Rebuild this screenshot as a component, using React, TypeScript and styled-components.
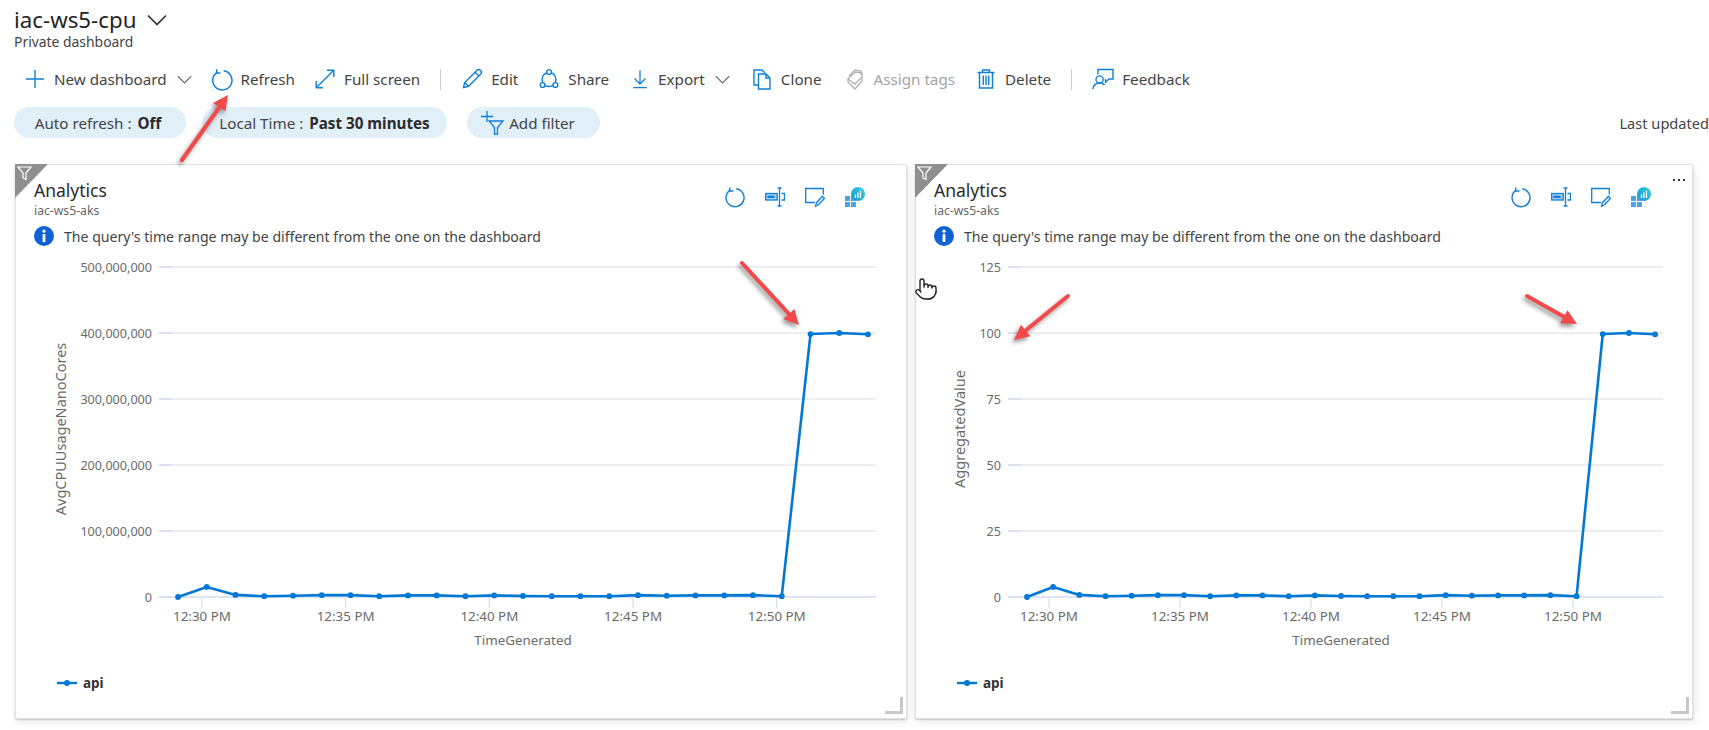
import React from "react";
import styled, { createGlobalStyle } from "styled-components";
import { Pointer } from "lucide-react";

const GlobalStyle = createGlobalStyle`
  html, body {
    margin: 0;
    padding: 0;
    background: #fff;
  }
  body {
    font-family: "Noto Sans", "Open Sans", sans-serif;
    color: #333;
  }
`;

const BLUE = "#0f7fd9";
const FONT = `"Noto Sans", "Open Sans", sans-serif`;

const Page = styled.div`
  position: relative;
  width: 1709px;
  height: 730px;
  overflow: hidden;
  background: #fff;
`;

const Header = styled.header`
  padding: 5px 0 0 14px;
`;

const TitleRow = styled.div`
  display: flex;
  align-items: center;
  gap: 11px;
  height: 30px;
`;

const Title = styled.h1`
  margin: 0;
  font-size: 22.3px;
  font-weight: 400;
  line-height: 30px;
  color: #252525;
`;

const Subtitle = styled.div`
  font-size: 13.9px;
  line-height: 16px;
  margin-top: -1px;
  color: #444;
`;

const Toolbar = styled.nav`
  display: flex;
  align-items: center;
  height: 32px;
  margin-top: 13px;
  padding-left: 10px;
`;

const ToolItem = styled.div<{ $gap: number; $disabled?: boolean }>`
  display: flex;
  align-items: center;
  gap: 8px;
  margin-right: ${(p) => p.$gap}px;
  font-size: 15.2px;
  white-space: nowrap;
  color: ${(p) => (p.$disabled ? "#a3a3a3" : "#444")};
`;

const ToolDivider = styled.span<{ $gap: number }>`
  width: 1px;
  height: 21px;
  background: #cfcfcf;
  margin-right: ${(p) => p.$gap}px;
`;

const FilterRow = styled.div`
  display: flex;
  align-items: center;
  height: 31px;
  margin-top: 12px;
`;

const Pill = styled.div<{ $width: number; $gap: number; $shift?: number }>`
  box-sizing: border-box;
  display: flex;
  align-items: center;
  justify-content: center;
  gap: 2px;
  width: ${(p) => p.$width}px;
  height: 31px;
  margin-right: ${(p) => p.$gap}px;
  padding-right: ${(p) => p.$shift ?? 0}px;
  border-radius: 16px;
  background: #e1eff9;
  font-size: 15.2px;
  white-space: nowrap;
  color: #444;

  b {
    font-weight: 700;
    color: #2b2b2b;
    margin-left: 4px;
  }
`;

const LastUpdated = styled.div`
  margin-left: auto;
  flex: none;
  font-size: 14.6px;
  white-space: nowrap;
  color: #444;
`;

const Board = styled.main`
  display: flex;
  gap: 8px;
  margin-top: 26px;
  padding-left: 15px;
`;

const Card = styled.section<{ $width: number }>`
  position: relative;
  box-sizing: border-box;
  width: ${(p) => p.$width}px;
  height: 555px;
  background: #fff;
  border: 1px solid #e2e2e2;
  border-radius: 2px;
  box-shadow: 0 1px 2px rgba(0, 0, 0, 0.2), 2px 3px 8px rgba(0, 0, 0, 0.08);
`;

const CornerFlag = styled.svg`
  position: absolute;
  left: -1px;
  top: -1px;
`;

const CardTop = styled.div`
  display: flex;
  justify-content: space-between;
  height: 81px;
  padding-left: 18px;
`;

const CardHeading = styled.div`
  padding-top: 14px;
`;

const CardTitle = styled.h2`
  margin: 0;
  font-size: 17.5px;
  font-weight: 400;
  line-height: 22px;
  color: #2b2b2b;
`;

const CardSub = styled.div`
  margin-top: 2px;
  font-size: 12.2px;
  line-height: 16px;
  color: #666;
`;

const Notice = styled.div`
  display: flex;
  align-items: center;
  gap: 10px;
  height: 20px;
  margin-top: 7px;
  font-size: 14.1px;
  white-space: nowrap;
  color: #444;
`;

const CardActions = styled.div`
  display: flex;
  align-items: center;
  gap: 20px;
  height: 22px;
  margin-top: 21px;
  padding-right: 41px;
`;

const MoreDots = styled.div`
  position: absolute;
  top: 14px;
  right: 7px;
  display: flex;
  gap: 3px;

  span {
    width: 2px;
    height: 2px;
    background: #333;
  }
`;

const ChartSvg = styled.svg`
  display: block;
  font-family: ${FONT};
`;

const Legend = styled.div`
  display: flex;
  align-items: center;
  gap: 6px;
  height: 20px;
  margin-top: 23px;
  padding-left: 41px;
  font-size: 13.5px;
  font-weight: 700;
  color: #333;
`;

const ResizeGrip = styled.span`
  position: absolute;
  right: 3px;
  bottom: 4px;
  width: 15px;
  height: 14px;
  border-right: 3px solid #c8c8c8;
  border-bottom: 3px solid #c8c8c8;
`;

const Overlay = styled.svg`
  position: absolute;
  left: 0;
  top: 0;
  pointer-events: none;
  filter: drop-shadow(-2px 3px 2px rgba(0, 0, 0, 0.4));
`;

const HandCursor = styled.div`
  position: absolute;
  left: 914px;
  top: 277px;
  line-height: 0;
`;

// --- toolbar icons, drawn to match the portal's line set ---

const Icon: React.FC<{ size?: number; color?: string; children: React.ReactNode }> = ({
  size = 22,
  color = BLUE,
  children,
}) => (
  <svg
    width={size}
    height={size}
    viewBox="0 0 22 22"
    fill="none"
    stroke={color}
    strokeWidth={1.4}
    style={{ flex: "none", display: "block" }}
  >
    {children}
  </svg>
);

const PlusIcon = () => (
  <Icon>
    <path d="M11 2v18M2 11h18" />
  </Icon>
);
const Chevron: React.FC<{ color?: string; width?: number }> = ({ color = "#666", width = 15 }) => (
  <svg width={width} height={width * 0.6} viewBox="0 0 20 12" fill="none" stroke={color} strokeWidth={1.7} style={{ flex: "none" }}>
    <path d="M1 1.5l9 9 9-9" />
  </svg>
);
const RefreshIcon = () => (
  <Icon size={23}>
    <path d="M13 2.700a9.200 9.200 0 1 1-6.900 1.900" />
    <path d="M6.400 1.200v3.600H10" />
  </Icon>
);
const FullScreenIcon = () => (
  <Icon>
    <path d="M2.500 19.500l17-17M13 2.200h6.800V9M2.200 13v6.800H9" />
  </Icon>
);
const EditIcon = () => (
  <Icon>
    <path d="M2.500 19.500l1.200-5L15.800 2.400a2 2 0 0 1 3.800 3.800L7.500 18.300z" />
    <path d="M3.700 14.500l3.800 3.800M14 4.200l3.800 3.800" />
  </Icon>
);
const ShareIcon = () => (
  <Icon>
    <circle cx="11" cy="11.500" r="7" />
    <circle cx="11" cy="4" r="2.400" fill="#fff" />
    <circle cx="4.600" cy="17" r="2.400" fill="#fff" />
    <circle cx="17.400" cy="17" r="2.400" fill="#fff" />
  </Icon>
);
const ExportIcon = () => (
  <Icon size={20}>
    <path d="M11 1.500v15M5 10.500l6 6 6-6M3.500 20.500h15" />
  </Icon>
);
const CloneIcon = () => (
  <Icon>
    <path d="M7 17H3V2h8l3 3" />
    <path d="M7.500 6h7.500l4 4v11H7.500z" />
    <path d="M15 6v4h4" />
  </Icon>
);
const TagsIcon = () => (
  <Icon color="#b4b4b4">
    <path d="M5 8l6-6 6 1v4" />
    <path d="M4 11l7-7 7 1v4l-7 7z" />
    <path d="M4 11v3l7 7 7-8v-4" />
  </Icon>
);
const DeleteIcon = () => (
  <Icon>
    <path d="M2.500 4.500h17M7.500 4.500V2h7v2.500M4.500 4.500V20h13V4.500" strokeWidth={1.5} />
    <path d="M8.300 7.500v9.500M11 7.500v9.500M13.700 7.500v9.500" />
  </Icon>
);
const FeedbackIcon = () => (
  <Icon>
    <circle cx="7.600" cy="11.500" r="3.600" />
    <path d="M1 21c0-3.600 3-6 6.600-6 2 0 3.700.8 5 2" />
    <path d="M6 6V1.500h15V11h-4l-3.500 3.200V11" />
  </Icon>
);
const AddFilterIcon = () => (
  <svg width="27" height="26" viewBox="0 0 27 26" fill="none" stroke={BLUE} strokeWidth={1.3} style={{ flex: "none" }}>
    <path d="M7 1v11M1 6.500h12" />
    <path d="M9 11h14l-5.500 6.500V24h-3v-6.500z" />
  </svg>
);

// --- tile icons ---

const TileRefresh = () => (
  <Icon size={21}>
    <path d="M12.800 1.900a9.400 9.400 0 1 1-7 1.900" strokeWidth={1.5} />
    <path d="M6 .6v3.600h4" strokeWidth={1.5} />
  </Icon>
);
const RenameIcon = () => (
  <svg width="20" height="20" viewBox="0 0 20 20" fill="none" stroke={BLUE} strokeWidth={1.3} style={{ flex: "none" }}>
    <rect x="0.700" y="6.500" width="11.500" height="6.500" fill="#a8d2f2" />
    <rect x="2.500" y="8.600" width="7" height="2.400" fill={BLUE} stroke="none" />
    <path d="M12.500 1h4M12.500 19h4M14.500 1v18M16.500 6.500h3v6.500h-3" />
  </svg>
);
const NoteIcon = () => (
  <svg width="20" height="20" viewBox="0 0 20 20" fill="none" stroke={BLUE} strokeWidth={1.3} style={{ flex: "none" }}>
    <path d="M10 15.500H.7V1.500h17.600v6" />
    <path d="M10.500 19.300l1-3.600 6-6.400 2 2-6 6.400z" />
  </svg>
);
const WorkbookIcon: React.FC<{ id: string }> = ({ id }) => (
  <svg width="20" height="20" viewBox="0 0 20 20" style={{ flex: "none" }}>
    <defs>
      <linearGradient id={id} x1="0" y1="1" x2="1" y2="0">
        <stop offset="0" stopColor="#1b93d1" />
        <stop offset="1" stopColor="#36d0e4" />
      </linearGradient>
    </defs>
    <path d="M0 9h5v5H0zM6 9h5v5H6zM0 15h5v5H0zM6 15h5v5H6z" fill="#4aa3e4" />
    <circle cx="13" cy="7" r="7" fill={`url(#${id})`} />
    <path d="M9.800 7.500h1.300V11H9.800zM12.300 5.500h1.300V11h-1.300zM14.800 3.800h1.300V11h-1.300z" fill="#fff" />
  </svg>
);
const InfoIcon = () => (
  <svg width="20" height="20" viewBox="0 0 20 20" style={{ flex: "none" }}>
    <circle cx="10" cy="10" r="10" fill="#0f62d6" />
    <circle cx="10" cy="5.200" r="1.600" fill="#fff" />
    <rect x="8.600" y="8" width="2.800" height="8" fill="#fff" />
  </svg>
);

// --- chart ---

const SAMPLES = [
  0, 3.8, 0.8, 0.3, 0.5, 0.7, 0.7, 0.3, 0.6, 0.6, 0.3, 0.6, 0.4, 0.3, 0.3, 0.3, 0.7, 0.5, 0.6, 0.6, 0.7, 0.3, 99.6,
  100, 99.5,
];
const TICKS = ["12:30 PM", "12:35 PM", "12:40 PM", "12:45 PM", "12:50 PM"];
const ZERO_Y = 351;
const ROW = 66;

interface IChartProps {
  width: number;
  plotLeft: number;
  plotRight: number;
  firstX: number;
  stepX: number;
  tickX: number;
  tickStep: number;
  yLabels: string[];
  yTitle: string;
  yTitleX: number;
  xTitleX: number;
}

const Chart: React.FC<IChartProps> = (c) => {
  const pts = SAMPLES.map((v, i) => [c.firstX + i * c.stepX, ZERO_Y - (v * ROW) / 25] as const);
  return (
    <ChartSvg width={c.width - 2} height={404} viewBox={`0 0 ${c.width - 2} 404`}>
      {c.yLabels.map((label, i) => {
        const y = ZERO_Y - ROW * (c.yLabels.length - 1 - i);
        return (
          <g key={label}>
            <line x1={c.plotLeft} x2={c.plotRight} y1={y} y2={y} stroke={i === 5 ? "#d3dcee" : "#e8e9ee"} strokeWidth={1.5} />
            <line x1={c.plotLeft} x2={c.plotLeft + 13} y1={y} y2={y} stroke="#d3dcee" strokeWidth={1.5} />
            <text x={c.plotLeft - 7} y={y + 5} textAnchor="end" fontSize={12.6} fill="#6b6b6b">
              {label}
            </text>
          </g>
        );
      })}
      {TICKS.map((t, i) => {
        const x = c.tickX + i * c.tickStep;
        return (
          <g key={t}>
            <line x1={x} x2={x} y1={ZERO_Y} y2={ZERO_Y + 11} stroke="#d3dcee" strokeWidth={1.2} />
            <text x={x} y={ZERO_Y + 24} textAnchor="middle" fontSize={13.4} fill="#6b6b6b">
              {t}
            </text>
          </g>
        );
      })}
      <text
        transform={`translate(${c.yTitleX} 183) rotate(-90)`}
        textAnchor="middle"
        dominantBaseline="middle"
        fontSize={14.5}
        fill="#6b6b6b"
      >
        {c.yTitle}
      </text>
      <text x={c.xTitleX} y={399} textAnchor="middle" fontSize={13.4} fill="#6b6b6b">
        TimeGenerated
      </text>
      <polyline
        points={pts.map((p) => p.join(",")).join(" ")}
        fill="none"
        stroke="#0078d4"
        strokeWidth={2.6}
        strokeLinejoin="round"
      />
      {pts.map(([x, y]) => (
        <circle key={x} cx={x} cy={y} r={2.9} fill="#0078d4" />
      ))}
    </ChartSvg>
  );
};

interface ITileProps extends IChartProps {
  gripId: string;
  showMore?: boolean;
}

const Tile: React.FC<ITileProps> = ({ gripId, showMore, ...chart }) => (
  <Card $width={chart.width}>
    <CornerFlag width="33" height="34" viewBox="0 0 33 34">
      <path d="M0 0h33L0 34z" fill="#8f8f8f" />
      <path d="M3 3h13l-5 6v6.500l-3-1.500V9z" fill="none" stroke="#fff" strokeWidth={1.2} />
    </CornerFlag>
    <CardTop>
      <CardHeading>
        <CardTitle>Analytics</CardTitle>
        <CardSub>iac-ws5-aks</CardSub>
        <Notice>
          <InfoIcon />
          The query's time range may be different from the one on the dashboard
        </Notice>
      </CardHeading>
      <CardActions>
        <TileRefresh />
        <RenameIcon />
        <NoteIcon />
        <WorkbookIcon id={gripId} />
      </CardActions>
    </CardTop>
    <Chart {...chart} />
    <Legend>
      <svg width="20" height="8" viewBox="0 0 20 8">
        <path d="M0 4h20" stroke="#0078d4" strokeWidth={2.4} />
        <circle cx="10" cy="4" r="3" fill="#0078d4" />
      </svg>
      api
    </Legend>
    {showMore && (
      <MoreDots>
        <span />
        <span />
        <span />
      </MoreDots>
    )}
    <ResizeGrip />
  </Card>
);

const ARROWS = [
  { from: [182, 160], to: [228, 95] },
  { from: [742, 263], to: [799, 325] },
  { from: [1068, 296], to: [1014, 340] },
  { from: [1527, 296], to: [1577, 324] },
];

const RedArrow: React.FC<{ from: number[]; to: number[] }> = ({ from, to }) => {
  const dx = to[0] - from[0];
  const dy = to[1] - from[1];
  const len = Math.hypot(dx, dy);
  const ux = dx / len;
  const uy = dy / len;
  const bx = to[0] - ux * 15;
  const by = to[1] - uy * 15;
  const head = [
    to,
    [bx - uy * 7.5, by + ux * 7.5],
    [bx + uy * 7.5, by - ux * 7.5],
  ];
  return (
    <g>
      <line x1={from[0]} y1={from[1]} x2={bx} y2={by} stroke="#f2494b" strokeWidth={4} strokeLinecap="round" />
      <polygon points={head.map((p) => p.join(",")).join(" ")} fill="#f2494b" />
    </g>
  );
};

const App: React.FC = () => (
  <Page>
    <GlobalStyle />
    <Header>
      <TitleRow>
        <Title>iac-ws5-cpu</Title>
        <Chevron color="#333" width={20} />
      </TitleRow>
      <Subtitle>Private dashboard</Subtitle>
      <Toolbar>
        <ToolItem $gap={10}>
          <PlusIcon />
          New dashboard
        </ToolItem>
        <ToolItem $gap={18}>
          <Chevron />
        </ToolItem>
        <ToolItem $gap={19}>
          <RefreshIcon />
          Refresh
        </ToolItem>
        <ToolItem $gap={20}>
          <FullScreenIcon />
          Full screen
        </ToolItem>
        <ToolDivider $gap={20} />
        <ToolItem $gap={20}>
          <EditIcon />
          Edit
        </ToolItem>
        <ToolItem $gap={21}>
          <ShareIcon />
          Share
        </ToolItem>
        <ToolItem $gap={10}>
          <ExportIcon />
          Export
        </ToolItem>
        <ToolItem $gap={21}>
          <Chevron />
        </ToolItem>
        <ToolItem $gap={22}>
          <CloneIcon />
          Clone
        </ToolItem>
        <ToolItem $gap={20} $disabled>
          <TagsIcon />
          Assign tags
        </ToolItem>
        <ToolItem $gap={20}>
          <DeleteIcon />
          Delete
        </ToolItem>
        <ToolDivider $gap={20} />
        <ToolItem $gap={0}>
          <FeedbackIcon />
          Feedback
        </ToolItem>
      </Toolbar>
      <FilterRow>
        <Pill $width={172} $gap={16} $shift={4}>
          Auto refresh : <b>Off</b>
        </Pill>
        <Pill $width={245} $gap={20}>
          Local Time : <b>Past 30 minutes</b>
        </Pill>
        <Pill $width={133} $gap={0} $shift={12}>
          <AddFilterIcon />
          Add filter
        </Pill>
        <LastUpdated>Last updated</LastUpdated>
      </FilterRow>
    </Header>
    <Board>
      <Tile
        gripId="wb-a"
        width={892}
        plotLeft={143}
        plotRight={860}
        firstX={162}
        stepX={28.75}
        tickX={186}
        tickStep={143.7}
        yLabels={["500,000,000", "400,000,000", "300,000,000", "200,000,000", "100,000,000", "0"]}
        yTitle="AvgCPUUsageNanoCores"
        yTitleX={46}
        xTitleX={507}
      />
      <Tile
        gripId="wb-b"
        showMore
        width={778}
        plotLeft={92}
        plotRight={747}
        firstX={111}
        stepX={26.17}
        tickX={133}
        tickStep={131}
        yLabels={["125", "100", "75", "50", "25", "0"]}
        yTitle="AggregatedValue"
        yTitleX={45}
        xTitleX={425}
      />
    </Board>
    <Overlay width="1709" height="730" viewBox="0 0 1709 730">
      {ARROWS.map((a) => (
        <RedArrow key={a.from[0]} from={a.from} to={a.to} />
      ))}
    </Overlay>
    <HandCursor>
      <Pointer size={24} strokeWidth={1.4} color="#222" fill="#fff" />
    </HandCursor>
  </Page>
);

export default App;
